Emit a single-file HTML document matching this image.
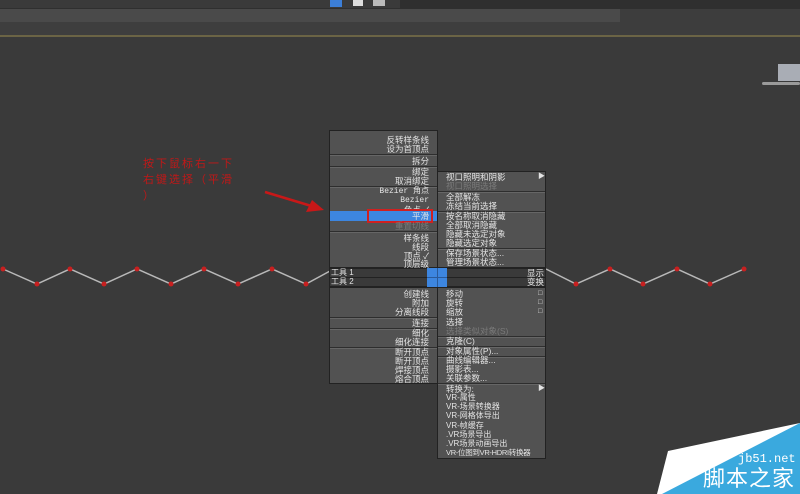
<!DOCTYPE html>
<html><head><meta charset="utf-8"><style>
*{margin:0;padding:0;box-sizing:border-box}
body{width:800px;height:494px;background:#3a3a3a;position:relative;overflow:hidden;font-family:"Liberation Sans","Noto Sans CJK SC",sans-serif;}
.a{position:absolute}
.m{position:absolute;background:#525252;border:1px solid #222}
.it{position:absolute;height:10px;line-height:10px;font-size:8.5px;color:#e4e4e4;white-space:nowrap}
.L{right:8px}
.R{left:8px}
.g{color:#7a7a7a}
.sep{position:absolute;left:0;right:0;height:2px;background:#2e2e2e;border-bottom:1px solid #666}
</style></head><body>
<div class="a" style="left:0;top:0;width:800px;height:9px;background:#2f2f2f"></div>
<div class="a" style="left:0;top:0;width:400px;height:8px;background:#3a3a3a"></div>
<div class="a" style="left:330px;top:0;width:12px;height:7px;background:#3c7fd8"></div>
<div class="a" style="left:353px;top:0;width:10px;height:6px;background:#ddd"></div>
<div class="a" style="left:373px;top:0;width:12px;height:6px;background:#bbb"></div>
<div class="a" style="left:0;top:9px;width:620px;height:13px;background:#4a4a4a"></div>
<div class="a" style="left:620px;top:9px;width:180px;height:26px;background:#3d3d3d"></div>
<div class="a" style="left:0;top:22px;width:620px;height:13px;background:#3e3e3e"></div>
<div class="a" style="left:0;top:35px;width:800px;height:2px;background:#6b6445"></div>
<div class="a" style="left:778px;top:64px;width:22px;height:17px;background:#a9adb5"></div>
<div class="a" style="left:762px;top:82px;width:38px;height:3px;background:#9a9a9a;border-radius:2px"></div>
<svg class="a" style="left:0;top:0" width="800" height="494">
<polyline fill="none" stroke="#b8b8b8" stroke-width="1.5" points="3,269 37,284 70,269 104,284 137,269 171,284 204,269 238,284 272,269 306,284 330,271"/>
<polyline fill="none" stroke="#b8b8b8" stroke-width="1.5" points="546,269 576,284 610,269 643,284 677,269 710,284 744,269"/>
<g fill="#c82020">
<circle cx="3" cy="269" r="2.5"/><circle cx="37" cy="284" r="2.5"/><circle cx="70" cy="269" r="2.5"/><circle cx="104" cy="284" r="2.5"/><circle cx="137" cy="269" r="2.5"/><circle cx="171" cy="284" r="2.5"/><circle cx="204" cy="269" r="2.5"/><circle cx="238" cy="284" r="2.5"/><circle cx="272" cy="269" r="2.5"/><circle cx="306" cy="284" r="2.5"/>
<circle cx="576" cy="284" r="2.5"/><circle cx="610" cy="269" r="2.5"/><circle cx="643" cy="284" r="2.5"/><circle cx="677" cy="269" r="2.5"/><circle cx="710" cy="284" r="2.5"/><circle cx="744" cy="269" r="2.5"/>
</g>
<line x1="265" y1="192" x2="318" y2="208" stroke="#c81818" stroke-width="2.5"/>
<polygon points="324,210 306,212 312,200" fill="#c81818"/>
</svg>
<div class="a" style="left:143px;top:156px;color:#c01818;font-size:11px;line-height:16px;letter-spacing:2px;width:120px">按下鼠标右一下<br>右键选择（平滑<br>）</div>
<div class="m" style="left:329px;top:130px;width:109px;height:138px">
<div class="it L" style="top:4px">反转样条线</div>
<div class="it L" style="top:13px">设为首顶点</div>
<div class="sep" style="top:23px"></div>
<div class="it L" style="top:25px">拆分</div>
<div class="sep" style="top:35px"></div>
<div class="it L" style="top:36px">绑定</div>
<div class="it L" style="top:45px">取消绑定</div>
<div class="sep" style="top:55px"></div>
<div class="it L" style="top:56px;font-family:'Liberation Mono',monospace;font-size:8px">Bezier 角点</div>
<div class="it L" style="top:65px;font-family:'Liberation Mono',monospace;font-size:8px">Bezier</div>
<div class="it L" style="top:74px">角点 ✓</div>
<div class="a" style="left:0;top:80px;width:108px;height:10px;background:#3d86e0"></div>
<div class="a" style="left:37px;top:78px;width:66px;height:14px;border:2px solid #d02020"></div>
<div class="it L" style="top:80px">平滑</div>
<div class="it L g" style="top:90px">重置切线</div>
<div class="sep" style="top:100px"></div>
<div class="it L" style="top:102px">样条线</div>
<div class="it L" style="top:111px">线段</div>
<div class="it L" style="top:120px">顶点 ✓</div>
<div class="it L" style="top:128px">顶层级</div>
</div>
<div class="a" style="left:329px;top:268px;width:217px;height:19px;background:#3a3a3a;border:1px solid #222"></div>
<div class="a" style="left:329px;top:277px;width:217px;height:1px;background:#222"></div>
<div class="it" style="left:331px;top:268px;font-size:8px">工具 1</div>
<div class="it" style="left:331px;top:277px;font-size:8px">工具 2</div>
<div class="it" style="left:527px;top:268px">显示</div>
<div class="it" style="left:527px;top:277px">变换</div>
<div class="a" style="left:427px;top:268px;width:20px;height:19px;background:#3d86e0"></div>
<div class="a" style="left:437px;top:268px;width:1px;height:19px;background:#2a5a9a"></div>
<div class="a" style="left:427px;top:277px;width:20px;height:1px;background:#2a5a9a"></div>
<div class="m" style="left:329px;top:287px;width:109px;height:97px">
<div class="it L" style="top:1px">创建线</div>
<div class="it L" style="top:10px">附加</div>
<div class="it L" style="top:19px">分离线段</div>
<div class="sep" style="top:29px"></div>
<div class="it L" style="top:30px">连接</div>
<div class="sep" style="top:40px"></div>
<div class="it L" style="top:40px">细化</div>
<div class="it L" style="top:49px">细化连接</div>
<div class="sep" style="top:59px"></div>
<div class="it L" style="top:59px">断开顶点</div>
<div class="it L" style="top:68px">断开顶点</div>
<div class="it L" style="top:77px">焊接顶点</div>
<div class="it L" style="top:86px">熔合顶点</div>
</div>
<div class="m" style="left:437px;top:171px;width:109px;height:97px">
<div class="it R" style="top:0px">视口照明和阴影</div>
<div class="it" style="left:100px;top:0px;font-size:7px">▶</div>
<div class="it R g" style="top:9px">视口照明选择</div>
<div class="sep" style="top:19px"></div>
<div class="it R" style="top:20px">全部解冻</div>
<div class="it R" style="top:29px">冻结当前选择</div>
<div class="sep" style="top:39px"></div>
<div class="it R" style="top:39px">按名称取消隐藏</div>
<div class="it R" style="top:48px">全部取消隐藏</div>
<div class="it R" style="top:57px">隐藏未选定对象</div>
<div class="it R" style="top:66px">隐藏选定对象</div>
<div class="sep" style="top:76px"></div>
<div class="it R" style="top:76px">保存场景状态...</div>
<div class="it R" style="top:85px">管理场景状态...</div>
</div>
<div class="m" style="left:437px;top:287px;width:109px;height:172px">
<div class="it R" style="top:1px">移动</div>
<div class="it R" style="top:10px">旋转</div>
<div class="it R" style="top:19px">缩放</div>
<div class="it" style="left:100px;top:1px;font-size:7px">□</div>
<div class="it" style="left:100px;top:10px;font-size:7px">□</div>
<div class="it" style="left:100px;top:19px;font-size:7px">□</div>
<div class="it R" style="top:29px">选择</div>
<div class="it R g" style="top:38px">选择类似对象(S)</div>
<div class="sep" style="top:48px"></div>
<div class="it R" style="top:48px">克隆(C)</div>
<div class="sep" style="top:58px"></div>
<div class="it R" style="top:58px">对象属性(P)...</div>
<div class="sep" style="top:68px"></div>
<div class="it R" style="top:67px">曲线编辑器...</div>
<div class="it R" style="top:76px">摄影表...</div>
<div class="it R" style="top:85px">关联参数...</div>
<div class="sep" style="top:95px"></div>
<div class="it R" style="top:96px">转换为:</div>
<div class="it" style="left:100px;top:96px;font-size:7px">▶</div>
<div class="it R" style="top:105px;font-size:8px">VR-属性</div>
<div class="it R" style="top:114px;font-size:8px">VR-场景转换器</div>
<div class="it R" style="top:123px;font-size:8px">VR-网格体导出</div>
<div class="it R" style="top:133px;font-size:8px">VR-帧缓存</div>
<div class="it R" style="top:142px;font-size:8px">.VR场景导出</div>
<div class="it R" style="top:151px;font-size:8px">.VR场景动画导出</div>
<div class="it R" style="top:160px;font-size:7.5px;letter-spacing:-0.3px">VR-位图到VR-HDRI转换器</div>
</div>
<svg class="a" style="left:0;top:0" width="800" height="494">
<polygon points="668,451 800,423 800,494 657,494" fill="#ffffff"/>
<polygon points="800,423 800,494 662,494" fill="#3aa9de"/>
</svg>
<div class="a" style="left:738px;top:452px;color:#fff;font-size:12px;font-family:'Liberation Mono',monospace">jb51.net</div>
<div class="a" style="left:703px;top:466px;color:#fff;font-size:22px;line-height:26px;letter-spacing:1px">脚本之家</div>
</body></html>
